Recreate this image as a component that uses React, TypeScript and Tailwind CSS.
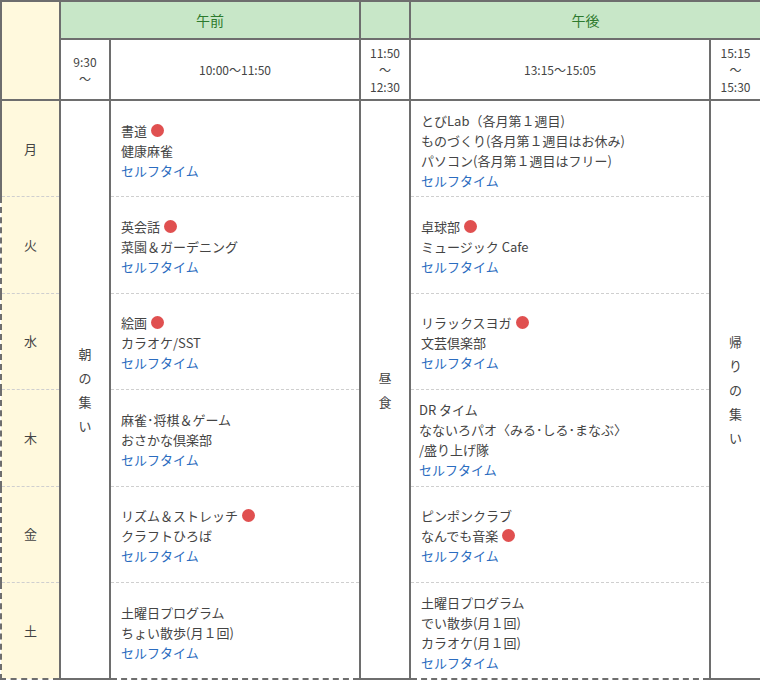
import React from "react";

const Dot = () => <span className="inline-block w-[13px] h-[13px] rounded-full bg-[#e05050] ml-[4px] align-[-1px]" />;
const Self = () => <div className="text-[#2b6cc0]">セルフタイム</div>;

type Line = { t: string; dot?: boolean };
const am: Line[][] = [
  [{ t: "書道", dot: true }, { t: "健康麻雀" }],
  [{ t: "英会話", dot: true }, { t: "菜園＆ガーデニング" }],
  [{ t: "絵画", dot: true }, { t: "カラオケ/SST" }],
  [{ t: "麻雀･将棋＆ゲーム" }, { t: "おさかな倶楽部" }],
  [{ t: "リズム＆ストレッチ", dot: true }, { t: "クラフトひろば" }],
  [{ t: "土曜日プログラム" }, { t: "ちょい散歩(月１回)" }],
];
const pm: Line[][] = [
  [{ t: "とびLab（各月第１週目)" }, { t: "ものづくり(各月第１週目はお休み)" }, { t: "パソコン(各月第１週目はフリー)" }],
  [{ t: "卓球部", dot: true }, { t: "ミュージック Cafe" }],
  [{ t: "リラックスヨガ", dot: true }, { t: "文芸倶楽部" }],
  [{ t: "DR タイム" }, { t: "なないろパオ〈みる･しる･まなぶ〉" }, { t: "/盛り上げ隊" }],
  [{ t: "ピンポンクラブ" }, { t: "なんでも音楽", dot: true }],
  [{ t: "土曜日プログラム" }, { t: "でい散歩(月１回)" }, { t: "カラオケ(月１回)" }],
];
const days = ["月", "火", "水", "木", "金", "土"];

const Cell = ({ lines, pl }: { lines: Line[]; pl: string }) => (
  <div className={`${pl} pt-[4px]`}>
    {lines.map((l, i) => (
      <div key={i}>{l.t}{l.dot && <Dot />}</div>
    ))}
    <Self />
  </div>
);

const V = ({ s }: { s: string }) => (
  <div className="flex flex-col items-center leading-[24px]">{s.split("").map((c, i) => <span key={i}>{c}</span>)}</div>
);

export default function App() {
  const B = "border-2 border-[#6e6e6e]";
  const dash = (i: number) => (i > 0 ? "border-t border-t-[#cfcfcf] border-dashed" : "");
  return (
    <div className="w-[760px] h-[680px] bg-white text-[13px] leading-[20px] text-[#444]" style={{ fontFamily: '"Noto Sans CJK JP", sans-serif' }}>
      <table className="border-collapse table-fixed w-[760px]">
        <colgroup>
          <col className="w-[59px]" /><col className="w-[50px]" /><col className="w-[250px]" /><col className="w-[50px]" /><col className="w-[300px]" /><col className="w-[51px]" />
        </colgroup>
        <tbody>
          <tr className="h-[38px]">
            <td rowSpan={2} className={`${B} bg-[#fff9dd]`} />
            <td colSpan={2} className={`${B} bg-[#c8e7c8] text-center text-[#2d7a2d] text-[14px]`}>午前</td>
            <td className={`${B} bg-[#c8e7c8]`} />
            <td colSpan={2} className={`${B} bg-[#c8e7c8] text-center text-[#2d7a2d] text-[14px]`}>午後</td>
          </tr>
          <tr className="h-[61px] text-[12px] leading-[17px] text-center">
            <td className={B}>9:30<br />～</td>
            <td className={B}>10:00～11:50</td>
            <td className={B}>11:50<br />～<br />12:30</td>
            <td className={B}>13:15～15:05</td>
            <td className={B}>15:15<br />～<br />15:30</td>
          </tr>
          {days.map((d, i) => (
            <tr key={d} className="h-[96.5px]">
              <td className={`border-x-2 border-x-[#6e6e6e] ${i === 5 ? "border-b-2 border-b-[#6e6e6e]" : ""} ${dash(i)} bg-[#fff9dd] text-center`}>{d}</td>
              {i === 0 && <td rowSpan={6} className={`${B} text-center`}><V s="朝の集い" /></td>}
              <td className={`border-x-2 border-x-[#6e6e6e] ${i === 5 ? "border-b-2 border-b-[#6e6e6e]" : ""} ${dash(i)} align-middle`}><Cell lines={am[i]} pl="pl-[10px]" /></td>
              {i === 0 && <td rowSpan={6} className={`${B} text-center`}><V s="昼食" /></td>}
              <td className={`border-x-2 border-x-[#6e6e6e] ${i === 5 ? "border-b-2 border-b-[#6e6e6e]" : ""} ${dash(i)} align-middle`}><Cell lines={pm[i]} pl={i === 3 ? "pl-[8px]" : "pl-[10px]"} /></td>
              {i === 0 && <td rowSpan={6} className={`${B} text-center`}><V s="帰りの集い" /></td>}
            </tr>
          ))}
        </tbody>
      </table>
    </div>
  );
}
